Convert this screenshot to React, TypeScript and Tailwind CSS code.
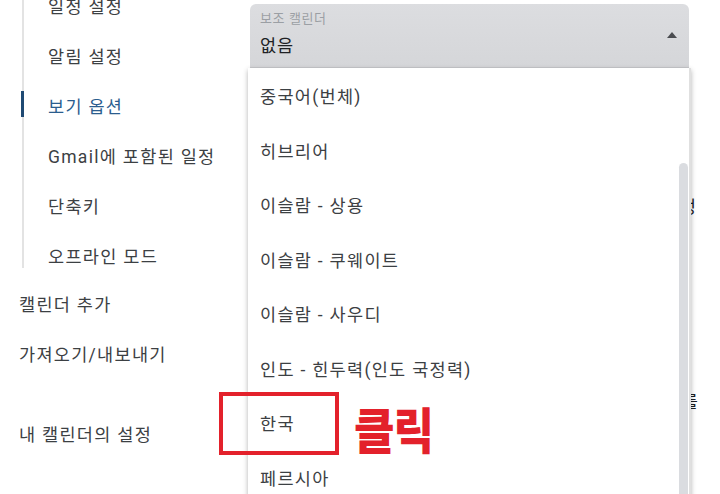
import React from "react";

const font = { fontFamily: "Roboto, 'Noto Sans CJK KR', sans-serif" };

const navItems = ["일정 설정", "알림 설정", "보기 옵션", "Gmail에 포함된 일정", "단축키", "오프라인 모드"];
const options = [
  "중국어(번체)",
  "히브리어",
  "이슬람 - 상용",
  "이슬람 - 쿠웨이트",
  "이슬람 - 사우디",
  "인도 - 힌두력(인도 국정력)",
  "한국",
  "페르시아",
];

export default function App() {
  return (
    <div
      className="relative w-[720px] h-[494px] overflow-hidden bg-white text-[#3c4043] flex"
      style={font}
    >
      {/* left navigation */}
      <div className="w-[250px] shrink-0 flex flex-col">
        <div className="ml-[22px] mt-[-18px] h-[286px] border-l-2 border-[#e3e3e3] flex flex-col">
          {navItems.map((t, i) => (
            <div key={t} className="relative h-[50px] shrink-0 flex items-center pl-[24px] text-[17.5px] tracking-[1.3px]">
              {i === 2 && <div className="absolute left-[-3px] top-[9px] w-[3px] h-[26px] bg-[#1f4a73]" />}
              <span className={i === 2 ? "text-[#2b5d8e]" : "text-[#3c4043]"}>{t}</span>
            </div>
          ))}
        </div>
        <div className="mt-[12px] pl-[19px] flex flex-col text-[17.5px] tracking-[1.3px]">
          <div className="h-[50px] flex items-center">캘린더 추가</div>
          <div className="h-[50px] flex items-center">가져오기/내보내기</div>
          <div className="h-[30px]" />
          <div className="h-[50px] flex items-center">내 캘린더의 설정</div>
        </div>
      </div>

      {/* main content */}
      <div className="relative flex-1 flex flex-col">
        <div className="mt-[4px] w-[439px] h-[64px] rounded-t-[6px] bg-gradient-to-b from-[#dcdde0] to-[#d5d6d9] border-b border-[#c8c9cc] flex items-center justify-between pl-[10px] pr-[12px]">
          <div className="flex flex-col">
            <span className="text-[13px] leading-[16px] tracking-[0.6px] text-[#9b9fa4] mt-[-2px]">보조 캘린더</span>
            <span className="text-[17.5px] leading-[24px] mt-[7px] text-[#202124] tracking-[1px]">없음</span>
          </div>
          <svg width="10" height="6" viewBox="0 0 10 6" className="mb-[2px]">
            <path d="M0 6 L5 0 L10 6 Z" fill="#4a4c50" />
          </svg>
        </div>
        <div className="flex flex-col text-[17px] text-[#202124]">
          <div className="h-[130px]" />
          <div className="h-[20px] flex justify-end pr-[24px] items-center">기본 설정</div>
          <div className="h-[175px]" />
          <div className="h-[20px] flex justify-end pr-[22px] items-center">를</div>
        </div>

        {/* dropdown menu */}
        <div className="absolute left-[-2px] top-[68px] w-[443px] h-[440px] bg-white shadow-[0_2px_5px_rgba(0,0,0,0.3)] border-r-[2px] border-[#e0e0e0]">
          <div className="absolute right-[1px] top-[95px] bottom-0 w-[9px] rounded-t-[5px] bg-[#dadce0]" />
          <div className="flex flex-col pt-[2px]">
            {options.map((o) => (
              <div key={o} className="h-[54.5px] shrink-0 flex items-center pl-[12px] text-[17.5px] tracking-[1.3px] text-[#3c4043]">
                {o}
              </div>
            ))}
          </div>
        </div>
      </div>

      {/* annotation */}
      <div className="absolute left-[219px] top-[392px] w-[120px] h-[63px] border-[4px] border-[#e3212b]" />
      <div
        className="absolute left-[354px] top-[398px] text-[44px] leading-[60px] font-black text-[#e3212b] tracking-[-1px] scale-y-[1.12]"
        style={{ fontFamily: "'Noto Sans CJK KR', sans-serif" }}
      >
        클릭
      </div>
    </div>
  );
}
